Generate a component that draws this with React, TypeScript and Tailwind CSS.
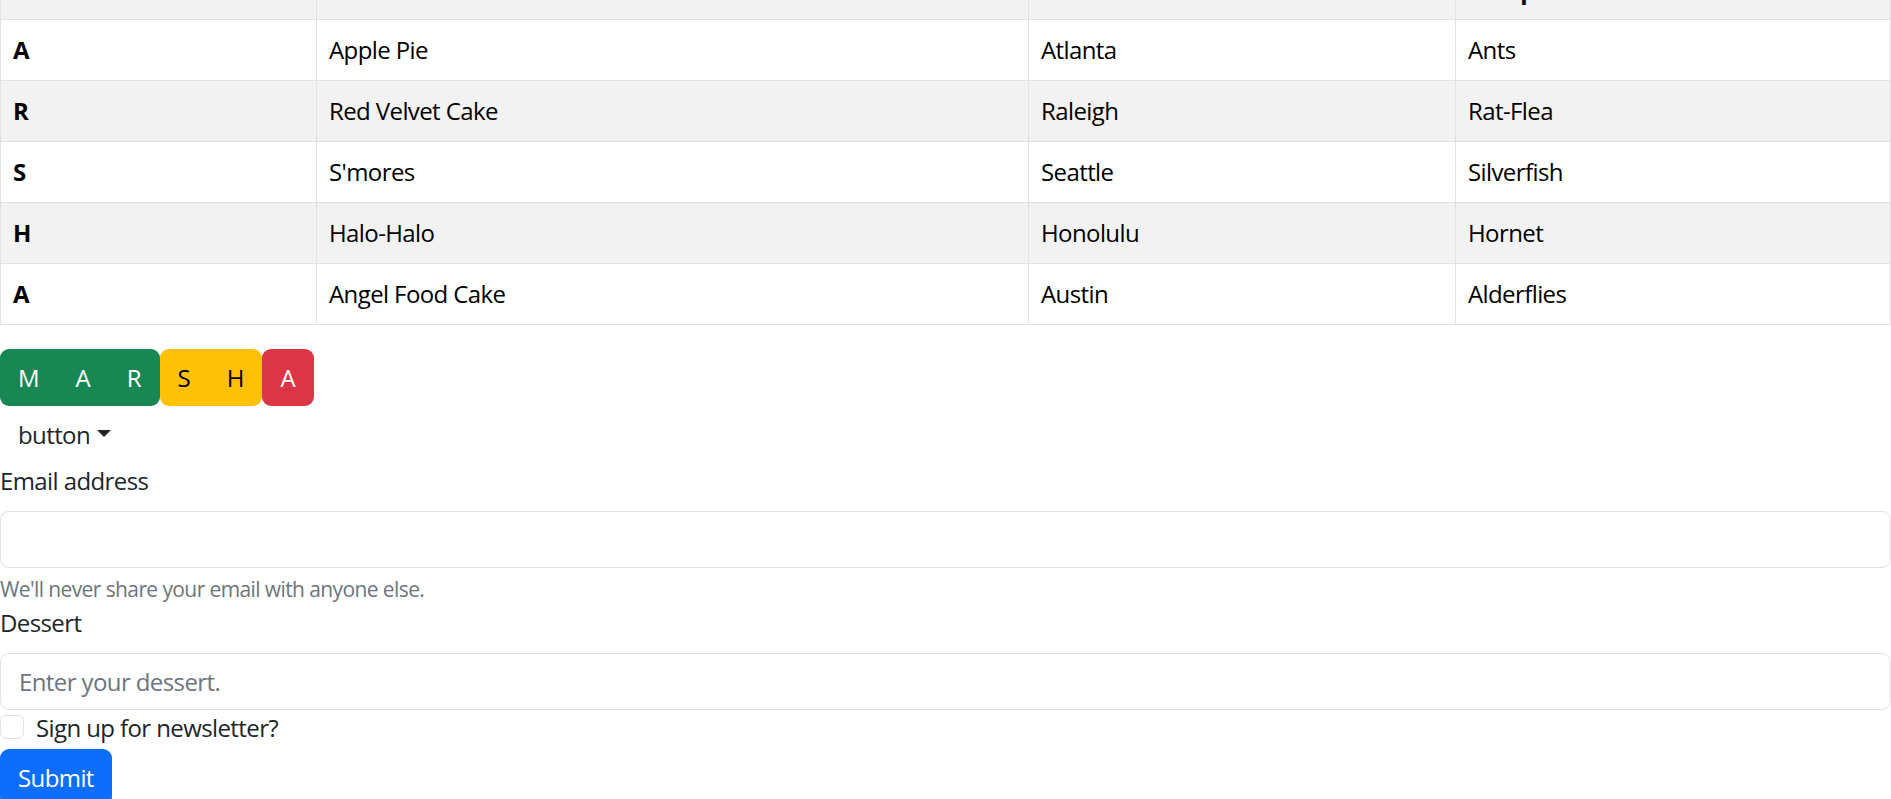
import React from "react";

const rows = [
  ["A", "Apple Pie", "Atlanta", "Ants"],
  ["R", "Red Velvet Cake", "Raleigh", "Rat-Flea"],
  ["S", "S'mores", "Seattle", "Silverfish"],
  ["H", "Halo-Halo", "Honolulu", "Hornet"],
  ["A", "Angel Food Cake", "Austin", "Alderflies"],
];

// only the bottom of the header row is in view
const head = ["", "", "", "Creepers"];

function Cell({ children, first, bold, bg }: any) {
  return (
    <div
      className={
        "h-[61px] px-3 py-3 leading-9 text-black border-b border-r border-[#dee2e6] " +
        (first ? "border-l " : "") +
        (bold ? "font-bold " : "") +
        bg
      }
    >
      {children}
    </div>
  );
}

function BtnGroup({ letters, color }: { letters: string[]; color: string }) {
  return (
    <div className={"flex rounded-[9px] " + color}>
      {letters.map((l, i) => (
        <button
          key={i}
          className="h-[57px] px-[17px] border border-transparent text-[24px] leading-9 tracking-normal"
        >
          {l}
        </button>
      ))}
    </div>
  );
}

export default function App() {
  return (
    <div
      className="h-[799px] overflow-hidden bg-white text-[24px] text-[#212529] tracking-[-0.025em]"
      style={{ fontFamily: '"Open Sans", "Noto Sans", sans-serif' }}
    >
      <div className="-mt-[41px]">
        <div className="grid grid-cols-[317px_712px_427px_1fr] mb-[24px]">
          {head.map((h, i) => (
            <Cell key={i} first={i === 0} bold bg="bg-[#f2f2f2] border-t">
              {h}
            </Cell>
          ))}
          {rows.map((r, ri) =>
            r.map((c, ci) => (
              <Cell
                key={ri + "-" + ci}
                first={ci === 0}
                bold={ci === 0}
                bg={ri % 2 === 1 ? "bg-[#f2f2f2]" : "bg-white"}
              >
                {c}
              </Cell>
            ))
          )}
        </div>

        <div className="flex">
          <BtnGroup letters={["M", "A", "R"]} color="bg-[#198754] text-white" />
          <BtnGroup letters={["S", "H"]} color="bg-[#ffc107] text-black" />
          <BtnGroup letters={["A"]} color="bg-[#dc3545] text-white" />
        </div>

        <button className="h-[57px] px-[18px] flex items-center leading-9">
          button
          <span className="ml-[7px] -mt-[3px] w-0 h-0 border-t-[7px] border-t-[#212529] border-x-[7px] border-x-transparent" />
        </button>

        <form className="flex flex-col">
          <label className="leading-9 mb-3">Email address</label>
          <input
            type="email"
            className="h-[57px] w-full border border-[#dee2e6] rounded-[9px] px-[18px] outline-none"
          />
          <div className="mt-[6px] text-[21px] leading-[31px] text-[#6c757d]">
            We'll never share your email with anyone else.
          </div>
          <label className="leading-9 mb-3">Dessert</label>
          <input
            type="text"
            placeholder="Enter your dessert."
            className="h-[57px] w-full border border-[#dee2e6] rounded-[9px] px-[18px] outline-none placeholder:text-[#6c757d]"
          />
          <div className="flex h-9 mb-[3px]">
            <span className="mt-[5px] w-6 h-6 border border-[#dee2e6] rounded-[6px] bg-white shrink-0" />
            <span className="ml-3 leading-9">Sign up for newsletter?</span>
          </div>
          <div>
            <button
              type="button"
              className="h-[57px] px-[18px] bg-[#0d6efd] text-white rounded-[9px] leading-9"
            >
              Submit
            </button>
          </div>
        </form>
      </div>
    </div>
  );
}
